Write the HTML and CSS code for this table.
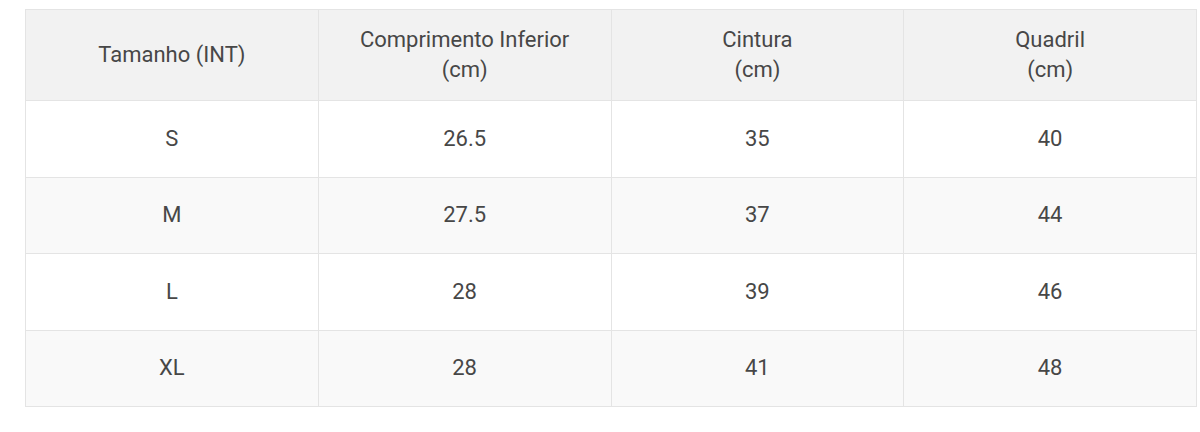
FILE: index.html
```html
<!DOCTYPE html>
<html lang="pt">
<head>
<meta charset="utf-8">
<link rel="stylesheet" href="styles.css">
</head>
<body>
<div class="wrap">
<table class="sizes">
<thead>
<tr>
<th>Tamanho (INT)</th>
<th>Comprimento Inferior<br>(cm)</th>
<th>Cintura<br>(cm)</th>
<th>Quadril<br>(cm)</th>
</tr>
</thead>
<tbody>
<tr><td>S</td><td>26.5</td><td>35</td><td>40</td></tr>
<tr class="alt"><td>M</td><td>27.5</td><td>37</td><td>44</td></tr>
<tr><td>L</td><td>28</td><td>39</td><td>46</td></tr>
<tr class="alt"><td>XL</td><td>28</td><td>41</td><td>48</td></tr>
</tbody>
</table>
</div>
</body>
</html>
```
FILE: styles.css
```css
html, body {
  margin: 0;
  padding: 0;
  background: #ffffff;
}
.wrap {
  padding: 9px 0 0 25px;
}
.sizes {
  width: 1172px;
  border-collapse: collapse;
  table-layout: fixed;
  font-family: Roboto, "Liberation Sans", sans-serif;
  font-size: 22px;
  color: #474747;
}
.sizes th,
.sizes td {
  border: 1px solid #e4e4e4;
  text-align: center;
  vertical-align: middle;
  padding: 0;
  font-weight: normal;
}
.sizes th {
  background: #f2f2f2;
  height: 90px;
  line-height: 30px;
}
.sizes td {
  height: 75.5px;
  line-height: 26px;
  background: #ffffff;
}
.sizes tr.alt td {
  background: #f9f9f9;
}
```
